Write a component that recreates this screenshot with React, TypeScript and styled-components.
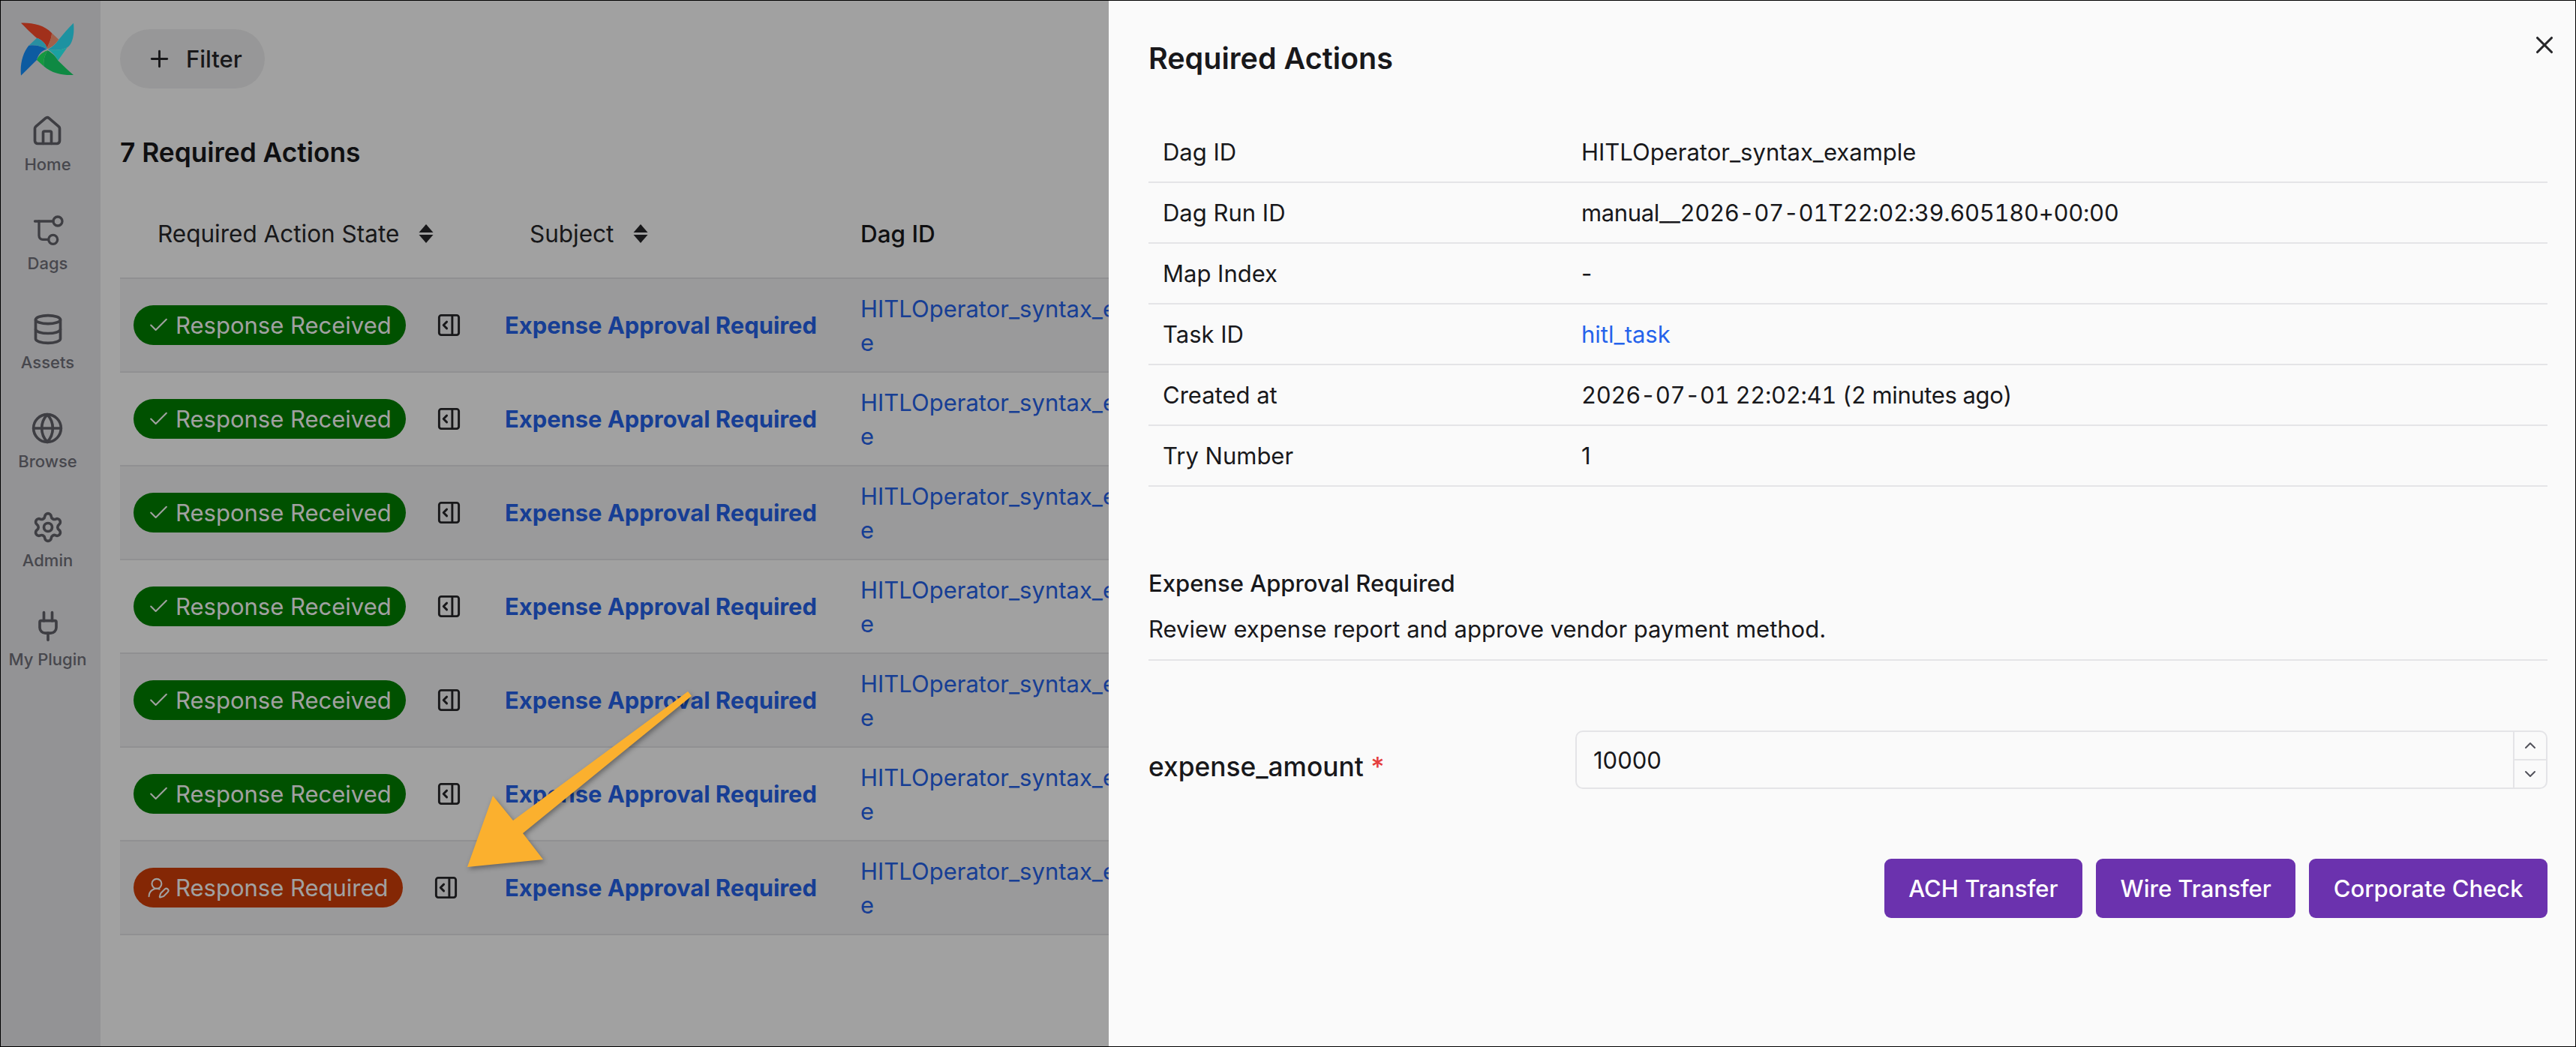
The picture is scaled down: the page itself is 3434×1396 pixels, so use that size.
import React from 'react';
import styled, { createGlobalStyle } from 'styled-components';
import {
  Check,
  ChevronDown,
  ChevronUp,
  Database,
  Globe,
  House,
  PanelRightOpen,
  Plug,
  Plus,
  Settings,
  UserRoundPen,
  X,
} from 'lucide-react';

const GlobalStyle = createGlobalStyle`
  html, body {
    margin: 0;
    padding: 0;
    background: #fff;
  }
  body {
    font-family: Inter, "Noto Sans", sans-serif;
    color: #18181b;
    overflow: hidden;
  }
  * {
    box-sizing: border-box;
  }
`;

const AirflowLogo = () => (
  <LogoSvg viewBox="0 0 270 270">
    <path fill="#a8301c" d="M27 32C70 30 120 40 150 72C150 92 140 112 131 132C125 112 108 98 90 92C70 75 45 50 27 32Z" />
    <path fill="#c2604a" d="M150 72L178 98C165 118 150 128 133 135L131 132C140 112 150 92 150 72Z" />
    <path fill="#1e93a6" d="M237 32C242 80 232 118 212 130C188 142 160 142 135 138C150 128 165 118 178 98C196 76 216 52 237 32Z" />
    <path fill="#1ca6b8" d="M135 138C160 142 188 142 212 130L175 182C165 162 150 148 135 138Z" />
    <path fill="#0f8a44" d="M237 240C200 242 150 235 118 205C116 182 122 160 133 142C150 150 165 165 175 182C196 202 216 222 237 240Z" />
    <path fill="#15993f" d="M133 142C110 150 95 165 90 180L118 205C116 182 122 160 133 142Z" />
    <path fill="#0d5bb0" d="M27 242C22 195 35 150 58 122C85 118 110 124 130 137C108 142 95 160 90 180C70 200 48 222 27 242Z" />
    <path fill="#2a8fcc" d="M58 122L90 92C108 98 125 112 131 132L130 137C110 124 85 118 58 122Z" />
  </LogoSvg>
);

const DagsIcon = () => (
  <svg width="44" height="44" viewBox="-2 -2 44 44" fill="none" stroke="currentColor" strokeWidth="3.3" strokeLinecap="round" strokeLinejoin="round">
    <path d="M3.5 8H28" />
    <circle cx="34" cy="8" r="6" />
    <path d="M9 8V27C9 30 11 32.3 14 32.3H21.7" />
    <circle cx="27.7" cy="32.3" r="6" />
  </svg>
);

const SortIcon = () => (
  <SortSvg viewBox="0 0 20 25">
    <path d="M10 0L19.5 11H.5Z" />
    <path d="M10 25L.5 14H19.5Z" />
  </SortSvg>
);

const navItems = [
  { label: 'Home', icon: <House size={44} /> },
  { label: 'Dags', icon: <DagsIcon /> },
  { label: 'Assets', icon: <Database size={44} /> },
  { label: 'Browse', icon: <Globe size={44} /> },
  { label: 'Admin', icon: <Settings size={44} /> },
  { label: 'My Plugin', icon: <Plug size={44} /> },
];

const rowStates = [true, true, true, true, true, true, false];

const details: { label: string; value: string; link?: boolean; numeric?: boolean }[] = [
  { label: 'Dag ID', value: 'HITLOperator_syntax_example' },
  { label: 'Dag Run ID', value: 'manual__2026-07-01T22:02:39.605180+00:00', numeric: true },
  { label: 'Map Index', value: '-' },
  { label: 'Task ID', value: 'hitl_task', link: true },
  { label: 'Created at', value: '2026-07-01 22:02:41 (2 minutes ago)', numeric: true },
  { label: 'Try Number', value: '1' },
];

const App = () => (
  <Page>
    <GlobalStyle />
    <Sidebar>
      <AirflowLogo />
      <Nav>
        {navItems.map((item) => (
          <NavItem key={item.label}>
            {item.icon}
            <NavLabel>{item.label}</NavLabel>
          </NavItem>
        ))}
      </Nav>
    </Sidebar>

    <Main>
      <FilterButton>
        <Plus size={35} />
        Filter
      </FilterButton>
      <Heading>7 Required Actions</Heading>
      <TableHead>
        <HeadCell $width={495} $inset={50}>
          Required Action State
          <SortIcon />
        </HeadCell>
        <HeadCell $width={474} $inset={51}>
          Subject
          <SortIcon />
        </HeadCell>
        <HeadCell $width={480} $inset={18} $strong>
          Dag ID
        </HeadCell>
      </TableHead>
      {rowStates.map((received, index) => (
        <Row key={index} $shaded={index % 2 === 0}>
          <StateCell>
            <Badge $received={received}>
              {received ? <Check size={31} strokeWidth={1.6} /> : <UserRoundPen size={31} strokeWidth={1.6} />}
              {received ? 'Response Received' : 'Response Required'}
            </Badge>
            <PanelButton>
              <PanelRightOpen size={35} />
            </PanelButton>
          </StateCell>
          <SubjectCell>Expense Approval Required</SubjectCell>
          <DagCell>HITLOperator_syntax_example</DagCell>
        </Row>
      ))}
    </Main>

    <Backdrop />

    <Drawer>
      <CloseButton>
        <X size={38} />
      </CloseButton>
      <DrawerTitle>Required Actions</DrawerTitle>
      <DetailList>
        {details.map((item) => (
          <DetailRow key={item.label}>
            <DetailLabel>{item.label}</DetailLabel>
            <DetailValue $link={item.link} $numeric={item.numeric}>
              {item.value}
            </DetailValue>
          </DetailRow>
        ))}
      </DetailList>
      <Subject>Expense Approval Required</Subject>
      <Description>Review expense report and approve vendor payment method.</Description>
      <FormRow>
        <FieldLabel>
          expense_amount <Required>*</Required>
        </FieldLabel>
        <NumberField>
          <NumberValue>10000</NumberValue>
          <Stepper>
            <StepButton>
              <ChevronUp size={24} />
            </StepButton>
            <StepButton>
              <ChevronDown size={24} />
            </StepButton>
          </Stepper>
        </NumberField>
      </FormRow>
      <Actions>
        <ActionButton>ACH Transfer</ActionButton>
        <ActionButton>Wire Transfer</ActionButton>
        <ActionButton>Corporate Check</ActionButton>
      </Actions>
    </Drawer>

    <ArrowSvg viewBox="0 0 330 260">
      <path d="M307 12L312 18L87 201L114 236L13 246L47 151L74 184Z" />
    </ArrowSvg>
  </Page>
);

export default App;

const Page = styled.div`
  position: relative;
  width: 3434px;
  height: 1396px;
  display: flex;
  border: 1px solid #000;
  overflow: hidden;
  background: #fff;
`;

const Sidebar = styled.aside`
  width: 133px;
  flex: none;
  padding: 19px 8px 0 0;
  background: #e9e9ec;
  display: flex;
  flex-direction: column;
  align-items: center;
`;

const LogoSvg = styled.svg`
  width: 90px;
  height: 90px;
  flex: none;
  filter: brightness(1.58);
`;

const Nav = styled.nav`
  margin-top: 43px;
  display: flex;
  flex-direction: column;
  gap: 51px;
  align-items: center;
`;

const NavItem = styled.div`
  display: flex;
  flex-direction: column;
  align-items: center;
  gap: 7px;
  color: #63636b;
`;

const NavLabel = styled.span`
  font-size: 22px;
  line-height: 30px;
  font-weight: 500;
  white-space: nowrap;
  color: #71717a;
`;

const Main = styled.main`
  width: 1344px;
  flex: none;
  overflow: hidden;
  padding: 38px 0 0 26px;
`;

const FilterButton = styled.div`
  width: 193px;
  height: 79px;
  border-radius: 40px;
  background: #f0f0f1;
  display: flex;
  align-items: center;
  gap: 18px;
  padding-left: 35px;
  font-size: 31px;
  font-weight: 500;
  color: #27272a;
`;

const Heading = styled.h2`
  margin: 62px 0 0;
  font-size: 35.3px;
  line-height: 48px;
  font-weight: 600;
  color: #18181b;
`;

const TableHead = styled.div`
  margin-top: 27px;
  height: 117px;
  padding-bottom: 2px;
  display: flex;
  border-bottom: 2px solid #e4e4e7;
`;

const HeadCell = styled.div<{ $width: number; $inset: number; $strong?: boolean }>`
  width: ${(p) => p.$width}px;
  flex: none;
  padding-left: ${(p) => p.$inset}px;
  display: flex;
  align-items: center;
  gap: 26px;
  font-size: 31.5px;
  font-weight: ${(p) => (p.$strong ? 500 : 400)};
  color: ${(p) => (p.$strong ? '#18181b' : '#27272a')};
  white-space: nowrap;
`;

const SortSvg = styled.svg`
  width: 20px;
  height: 25px;
  fill: #27272a;
  flex: none;
`;

const Row = styled.div<{ $shaded: boolean }>`
  height: 125px;
  display: flex;
  align-items: center;
  border-bottom: 2px solid #e4e4e7;
  background: ${(p) => (p.$shaded ? '#f4f4f5' : 'transparent')};
`;

const StateCell = styled.div`
  width: 495px;
  flex: none;
  padding-left: 18px;
  display: flex;
  align-items: center;
  gap: 40px;
`;

const Badge = styled.div<{ $received: boolean }>`
  width: ${(p) => (p.$received ? 363 : 359)}px;
  height: 53px;
  flex: none;
  border-radius: 27px;
  padding-left: 18px;
  display: flex;
  align-items: center;
  gap: 7px;
  background: ${(p) => (p.$received ? '#008000' : '#d23e08')};
  color: #fff;
  font-size: 31px;
  white-space: nowrap;
`;

const PanelButton = styled.div`
  display: flex;
  flex: none;
  color: #27272a;
`;

const SubjectCell = styled.div`
  width: 474px;
  flex: none;
  padding-left: 18px;
  font-size: 30.9px;
  font-weight: 700;
  color: #2563eb;
  white-space: nowrap;
`;

const DagCell = styled.div`
  width: 472px;
  flex: none;
  padding-left: 18px;
  padding-right: 18px;
  font-size: 31px;
  line-height: 45px;
  color: #2563eb;
  word-break: break-all;
`;

const Backdrop = styled.div`
  position: absolute;
  inset: 0;
  background: rgba(0, 0, 0, 0.37);
`;

const Drawer = styled.section`
  position: absolute;
  top: 0;
  right: 0;
  bottom: 0;
  width: 1955px;
  padding: 52px 37px 0 53px;
  background: #fafafa;
`;

const CloseButton = styled.div`
  position: absolute;
  top: 40px;
  right: 22px;
  display: flex;
  color: #27272a;
`;

const DrawerTitle = styled.h2`
  margin: 0;
  font-size: 39.5px;
  line-height: 50px;
  font-weight: 600;
  color: #18181b;
`;

const DetailList = styled.div`
  margin-top: 60px;
`;

const DetailRow = styled.div`
  height: 81px;
  display: flex;
  align-items: center;
  padding-left: 19px;
  border-bottom: 2px solid #e4e4e7;
  font-size: 31px;
`;

const DetailLabel = styled.div`
  width: 558px;
  flex: none;
`;

const DetailValue = styled.div<{ $link?: boolean; $numeric?: boolean }>`
  color: ${(p) => (p.$link ? '#2563eb' : '#18181b')};
  font-variant-numeric: ${(p) => (p.$numeric ? 'lining-nums tabular-nums' : 'normal')};
  letter-spacing: ${(p) => (p.$numeric ? '-0.35px' : 'normal')};
`;

const Subject = styled.div`
  margin-top: 107px;
  font-size: 31px;
  line-height: 44px;
  font-weight: 500;
`;

const Description = styled.div`
  margin-top: 17px;
  padding-bottom: 18px;
  font-size: 31px;
  line-height: 44px;
  border-bottom: 2px solid #e4e4e7;
`;

const FormRow = styled.div`
  margin-top: 93px;
  display: flex;
`;

const FieldLabel = styled.div`
  width: 569px;
  flex: none;
  padding-top: 27px;
  font-size: 35.3px;
  line-height: 44px;
  font-weight: 500;
`;

const Required = styled.span`
  color: #e53e3e;
`;

const NumberField = styled.div`
  flex: 1;
  height: 78px;
  display: flex;
  align-items: stretch;
  border: 2px solid #e4e4e7;
  border-radius: 10px;
`;

const NumberValue = styled.div`
  flex: 1;
  padding-left: 22px;
  display: flex;
  align-items: center;
  font-size: 31px;
`;

const Stepper = styled.div`
  width: 44px;
  flex: none;
  display: flex;
  flex-direction: column;
  border-left: 2px solid #e4e4e7;
`;

const StepButton = styled.div`
  flex: 1;
  display: flex;
  align-items: center;
  justify-content: center;
  color: #52525b;
  & + & {
    border-top: 2px solid #e4e4e7;
  }
`;

const Actions = styled.div`
  margin-top: 93px;
  display: flex;
  justify-content: flex-end;
  gap: 18px;
`;

const ActionButton = styled.div`
  height: 79px;
  padding: 0 32.5px;
  display: flex;
  align-items: center;
  border-radius: 9px;
  background: #6b32ae;
  color: #fff;
  font-size: 31px;
  font-weight: 500;
  white-space: nowrap;
`;

const ArrowSvg = styled.svg`
  position: absolute;
  left: 609px;
  top: 909px;
  width: 330px;
  height: 260px;
  fill: #fbb02e;
  filter: drop-shadow(2px 3px 3px rgba(0, 0, 0, 0.35));
`;
